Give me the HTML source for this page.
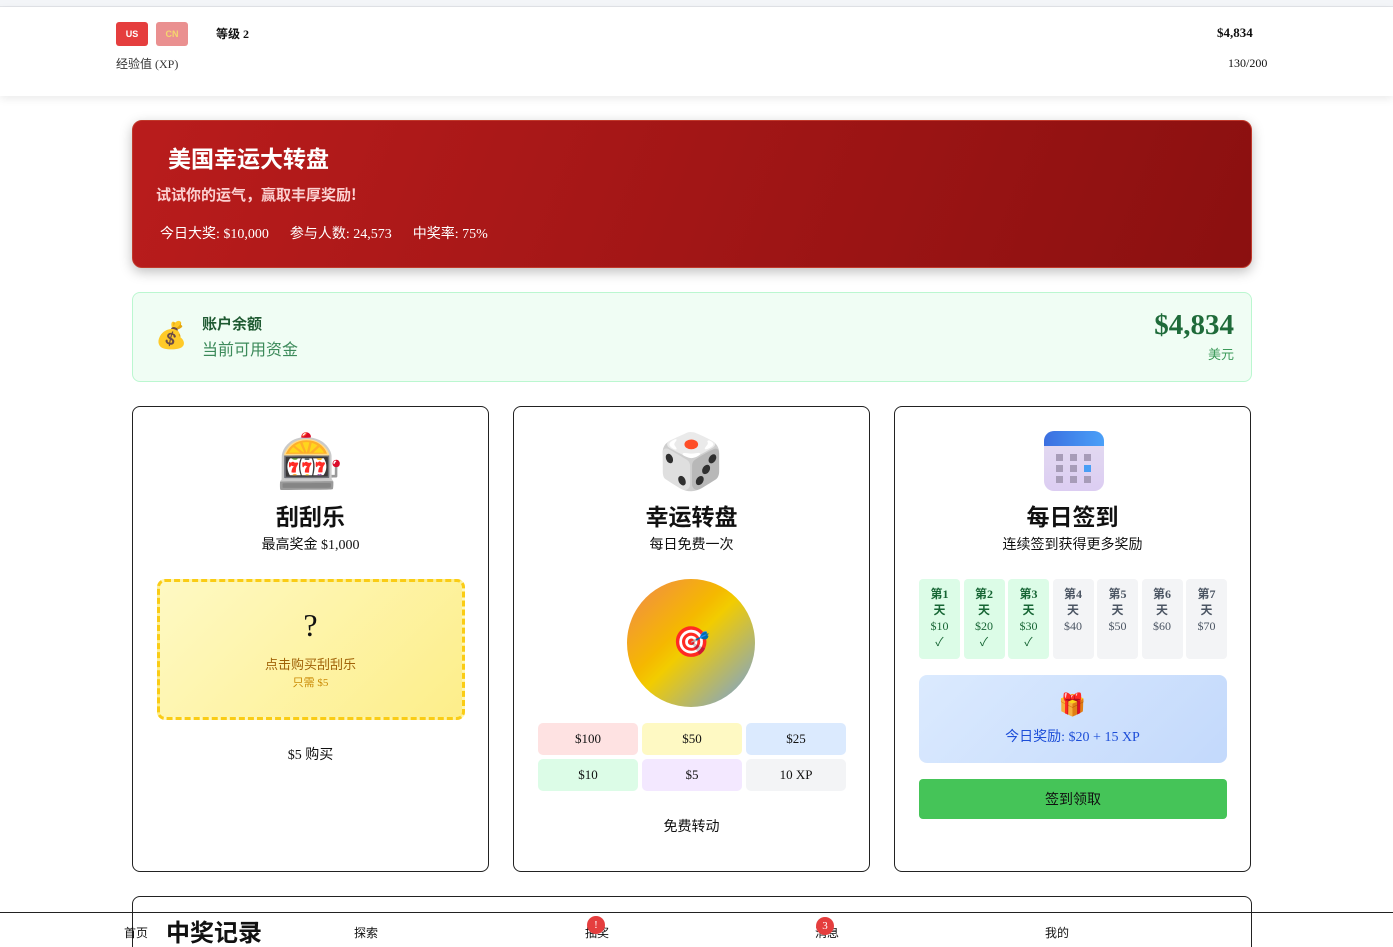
<!DOCTYPE html>
<html><head><meta charset="utf-8"><style>
*{margin:0;padding:0;box-sizing:border-box}
html,body{width:1393px;height:947px;overflow:hidden}
body{background:#fff;font-family:"Liberation Serif","Noto Sans CJK SC",serif;position:relative;color:#111}
.a{position:absolute}
.c{text-align:center}
.cjk{font-family:"Noto Sans CJK SC",sans-serif}
.top{left:0;top:0;width:1393px;height:7px;background:#f3f5f8;border-bottom:1px solid #e2e4e8}
.hdr{left:0;top:7px;width:1393px;height:89px;background:#fff;box-shadow:0 3px 8px rgba(0,0,0,.08)}
.flag{top:22px;width:32px;height:24px;border-radius:3px;font:bold 9px "Liberation Sans",sans-serif;display:flex;align-items:center;justify-content:center}
.card{border:1px solid #222;border-radius:8px;background:#fff;top:406px;width:357px;height:466px}
.ic{font-size:54px;line-height:64px;font-family:"Noto Color Emoji",sans-serif}
.t{font:bold 23px "Noto Sans CJK SC",sans-serif;width:100%;text-align:center}
.s{font-size:14px;width:100%;text-align:center}
.p{height:32px;border-radius:5px;display:flex;align-items:center;justify-content:center;font-size:13px}
.d{width:41px;height:80px;border-radius:4px;font-size:12px;line-height:16px;text-align:center;padding-top:7px}
.dg{background:#dcfce7;color:#166534}
.dx{background:#f3f4f6;color:#4b5563}
.nav{top:924px;font-size:12px}
.bd{width:18px;height:18px;border-radius:50%;background:#e53e3e;color:#fff;font-size:11px;display:flex;align-items:center;justify-content:center}
.cal{left:149px;top:24px;width:60px;height:60px;border-radius:10px;background:linear-gradient(#e4dcf0,#dccdf2);overflow:hidden}
.cal .hd{height:15px;background:linear-gradient(90deg,#3b6fe0,#4aa0f8)}
.cal i{position:absolute;width:7px;height:7px;background:#a79cb8}
</style></head><body>
<div class="a top"></div>
<div class="a hdr"></div>
<div class="a flag" style="left:116px;background:#e53e3e;color:#fff">US</div>
<div class="a flag" style="left:156px;background:#ea9090;color:#f5d76e">CN</div>
<div class="a" style="left:216px;top:25px;font-size:12px;font-weight:bold">等级 2</div>
<div class="a" style="left:116px;top:55px;font-size:12px;color:#333">经验值 (XP)</div>
<div class="a" style="left:1217px;top:25px;font-size:13px;font-weight:bold">$4,834</div>
<div class="a" style="left:1228px;top:56px;font-size:12px">130/200</div>

<div class="a" style="left:132px;top:120px;width:1120px;height:148px;border-radius:10px;background:linear-gradient(110deg,#b91c1c,#8b1010);box-shadow:0 4px 12px rgba(0,0,0,.25);border:1px solid #c0392b"></div>
<div class="a cjk" style="left:168px;top:140px;font-size:23px;font-weight:bold;color:#fff">美国幸运大转盘</div>
<div class="a cjk" style="left:156px;top:184px;font-size:15px;font-weight:bold;color:#fbd0d0">试试你的运气，赢取丰厚奖励!</div>
<div class="a" style="left:160px;top:223px;font-size:14px;color:#fff">今日大奖: $10,000 &nbsp;&nbsp;&nbsp;&nbsp; 参与人数: 24,573 &nbsp;&nbsp;&nbsp;&nbsp; 中奖率: 75%</div>

<div class="a" style="left:132px;top:292px;width:1120px;height:90px;border-radius:8px;background:#f0fdf4;border:1px solid #bbf7d0"></div>
<div class="a" style="left:155px;top:321px;font-size:26px;line-height:30px">💰</div>
<div class="a cjk" style="left:202px;top:313px;font-size:15px;font-weight:bold;color:#1f5a32">账户余额</div>
<div class="a cjk" style="left:202px;top:336px;font-size:16px;color:#3c8a5a">当前可用资金</div>
<div class="a" style="left:1130px;top:309px;width:104px;text-align:right;font-size:29px;font-weight:bold;color:#1f6b3a">$4,834</div>
<div class="a cjk" style="left:1200px;top:344px;width:34px;text-align:right;font-size:13px;color:#3c9a5a">美元</div>

<div class="a card" style="left:132px">
 <div class="a ic c" style="left:0;width:100%;top:24px">🎰</div>
 <div class="a t" style="top:91px">刮刮乐</div>
 <div class="a s" style="top:127px">最高奖金 $1,000</div>
 <div class="a" style="left:24px;top:172px;width:308px;height:141px;border:3px dashed #facc15;border-radius:8px;background:linear-gradient(135deg,#fef9c3,#fdee8a)"></div>
 <div class="a c" style="left:0;width:100%;top:200px;font-size:32px">?</div>
 <div class="a c" style="left:0;width:100%;top:247px;font-size:13px;color:#a16207">点击购买刮刮乐</div>
 <div class="a c" style="left:0;width:100%;top:267px;font-size:11px;color:#ca8a04">只需 $5</div>
 <div class="a c" style="left:0;width:100%;top:337px;font-size:14px">$5 购买</div>
</div>

<div class="a card" style="left:513px">
 <div class="a ic c" style="left:0;width:100%;top:24px">🎲</div>
 <div class="a t" style="top:91px">幸运转盘</div>
 <div class="a s" style="top:127px">每日免费一次</div>
 <div class="a" style="left:113px;top:172px;width:128px;height:128px;border-radius:50%;background:linear-gradient(135deg,#f0884f 0%,#f5b800 40%,#f2cc00 50%,#8aa8b8 90%)"></div>
 <div class="a c" style="left:0;width:100%;top:218px;font-size:30px;line-height:36px">🎯</div>
 <div class="a" style="left:24px;top:316px;width:308px;display:grid;grid-template-columns:1fr 1fr 1fr;gap:4px">
  <div class="p" style="background:#fee2e2">$100</div><div class="p" style="background:#fef9c3">$50</div><div class="p" style="background:#dbeafe">$25</div>
  <div class="p" style="background:#dcfce7">$10</div><div class="p" style="background:#f3e8ff">$5</div><div class="p" style="background:#f3f4f6">10 XP</div>
 </div>
 <div class="a c" style="left:0;width:100%;top:409px;font-size:14px">免费转动</div>
</div>

<div class="a card" style="left:894px">
 <div class="a cal"><div class="hd"></div>
  <i style="left:12px;top:23px"></i><i style="left:26px;top:23px"></i><i style="left:40px;top:23px"></i>
  <i style="left:12px;top:34px"></i><i style="left:26px;top:34px"></i><i style="left:40px;top:34px;background:#4a9ef5"></i>
  <i style="left:12px;top:45px"></i><i style="left:26px;top:45px"></i><i style="left:40px;top:45px"></i>
 </div>
 <div class="a t" style="top:91px">每日签到</div>
 <div class="a s" style="top:127px">连续签到获得更多奖励</div>
 <div class="a" style="left:24px;top:172px;width:308px;display:flex;justify-content:space-between">
  <div class="d dg"><b>第1<br>天</b><br>$10<br>✓</div>
  <div class="d dg"><b>第2<br>天</b><br>$20<br>✓</div>
  <div class="d dg"><b>第3<br>天</b><br>$30<br>✓</div>
  <div class="d dx"><b>第4<br>天</b><br>$40</div>
  <div class="d dx"><b>第5<br>天</b><br>$50</div>
  <div class="d dx"><b>第6<br>天</b><br>$60</div>
  <div class="d dx"><b>第7<br>天</b><br>$70</div>
 </div>
 <div class="a" style="left:24px;top:268px;width:308px;height:88px;border-radius:8px;background:linear-gradient(135deg,#dbeafe,#c3d9fc)"></div>
 <div class="a c" style="left:0;width:100%;top:285px;font-size:22px">🎁</div>
 <div class="a c" style="left:0;width:100%;top:319px;font-size:14px;color:#1d4ed8">今日奖励: $20 + 15 XP</div>
 <div class="a" style="left:24px;top:372px;width:308px;height:40px;border-radius:4px;background:#45c458;display:flex;align-items:center;justify-content:center;font-size:14px">签到领取</div>
</div>

<div class="a" style="left:132px;top:896px;width:1120px;height:80px;border:1px solid #222;border-radius:8px;background:#fff"></div>
<div class="a" style="left:0;top:912px;width:1393px;height:1px;background:#222"></div>
<div class="a cjk" style="left:166px;top:913px;font-size:24px;font-weight:bold;line-height:36px">中奖记录</div>
<div class="a nav" style="left:124px">首页</div>
<div class="a nav" style="left:354px">探索</div>
<div class="a nav" style="left:585px">抽奖</div>
<div class="a nav" style="left:815px">消息</div>
<div class="a nav" style="left:1045px">我的</div>
<div class="a bd" style="left:587px;top:916px">!</div>
<div class="a bd" style="left:816px;top:917px">3</div>
</body></html>
